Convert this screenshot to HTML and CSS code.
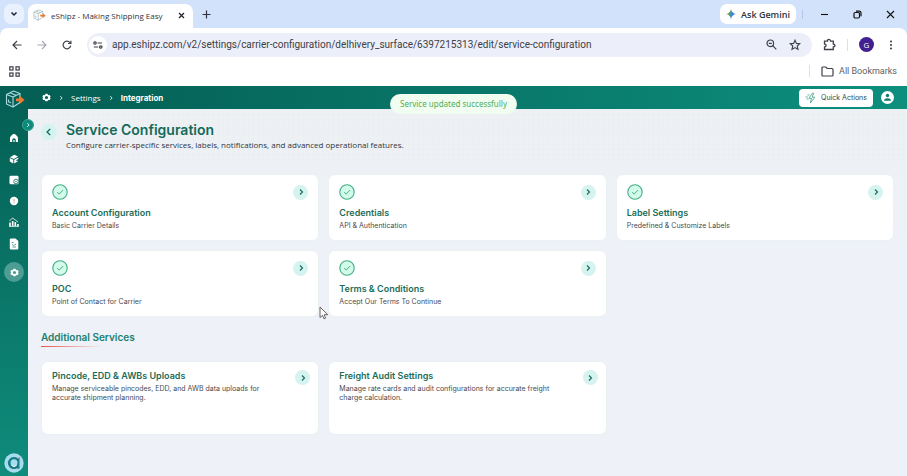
FILE: index.html
```
<!DOCTYPE html>
<html lang="en">
<head>
    <meta charset="UTF-8">
    <meta name="viewport" content="width=device-width, initial-scale=1.0">
    <title>eShipz - Making Shipping Easy</title>
    <link rel="stylesheet" href="styles.css">
</head>
<body>
    <!-- Shared icons -->
    <svg class="sprite" aria-hidden="true">
        <symbol id="chevron" viewBox="0 0 8 8"><path d="M3 1.5 5.5 4 3 6.5" fill="none" stroke="currentColor" stroke-width="1.1"/></symbol>
        <symbol id="check" viewBox="0 0 16 16"><circle cx="8" cy="8" r="7.2" fill="#d3fbe9" stroke="#3fae85" stroke-width="1.1"/><path d="m5.2 8.2 2 1.9 3.8-4" fill="none" stroke="#4bae8b" stroke-width="1"/></symbol>
        <symbol id="gear" viewBox="0 0 10 10"><path fill-rule="evenodd" fill="currentColor" d="M4 .8h2l.4 1 1.100.6 1.100-.1 1 1.700-.7.9v.4l.7.8-1 1.800-1.100-.2-1.100.6L6 9.300H4l-.4-1-1.100-.6-1.100.2-1-1.800.7-.8v-.5L.4 4l1-1.700 1.100.1 1.100-.6zM5 3.200a1.800 1.800 0 1 0 0 3.600 1.800 1.800 0 0 0 0-3.600"/></symbol>
        <symbol id="box" viewBox="0 0 20 18"><g fill="none" stroke="currentColor" stroke-width="1.100" stroke-linejoin="round"><path d="M1.500 4.500 8.500 1l6.500 2.500v9L8 17l-6.500-3z"/><path d="m1.500 4.500 6.500 2.500 7-3.500M8 7v10M5 2.800l6.500 2.700M3.500 9.500v2.200l2.500 1"/></g><path d="M11 8.600h4V6l4.500 4-4.500 3.800v-2.500h-4z" fill="#f07b30"/></symbol>
    </svg>

    <div class="window">
        <header class="browser">
            <div class="tab-strip">
                <button class="tab-search" aria-label="Search tabs"><svg width="8" height="8" viewBox="0 0 8 8"><path d="m1.500 2.500 2.500 2.500 2.500-2.500" fill="none" stroke="#1f2430" stroke-width="1.500"/></svg></button>
                <div class="tab">
                    <svg class="favicon" width="13" height="12"><use href="#box"/></svg>
                    <span>eShipz - Making Shipping Easy</span>
                    <button class="tab-close" aria-label="Close tab"><svg width="7" height="7" viewBox="0 0 7 7"><path d="m1 1 5 5M6 1 1 6" stroke="#1f2430" stroke-width="1.300"/></svg></button>
                </div>
                <button class="tab-new" aria-label="New tab"><svg width="9" height="9" viewBox="0 0 9 9"><path d="M4.500.500v8M.500 4.500h8" stroke="#30343c" stroke-width="1.200"/></svg></button>
                <button class="gemini">
                    <svg width="10" height="10" viewBox="0 0 10 10"><defs><linearGradient id="spark" x1="0" y1=".3" x2="1" y2=".7"><stop offset="0" stop-color="#e7a13c"/><stop offset=".35" stop-color="#54a36a"/><stop offset=".6" stop-color="#3b82e8"/><stop offset="1" stop-color="#4a7be0"/></linearGradient></defs><path d="M5 0q.8 4.200 5 5-4.200.800-5 5-.800-4.200-5-5 4.200-.800 5-5" fill="url(#spark)"/></svg>
                    Ask Gemini
                </button>
                <div class="window-buttons">
                    <button aria-label="Minimize"><svg width="9" height="9" viewBox="0 0 9 9"><path d="M1 4.500h7" stroke="#111" stroke-width="1.100"/></svg></button>
                    <button aria-label="Restore"><svg width="9" height="9" viewBox="0 0 9 9"><g fill="none" stroke="#111" stroke-width="1.200"><rect x="1" y="2.500" width="5.500" height="5.500" rx="1.200"/><path d="M3 1.200h3q2 0 2 2v3"/></g></svg></button>
                    <button aria-label="Close"><svg width="9" height="9" viewBox="0 0 9 9"><path d="m1 1 7 7M8 1 1 8" stroke="#111" stroke-width="1.100"/></svg></button>
                </div>
            </div>

            <div class="toolbar">
                <button aria-label="Back"><svg width="10" height="10" viewBox="0 0 10 10"><path d="M9.500 5H1.200M5 1 1 5l4 4" fill="none" stroke="#3c4048" stroke-width="1.200"/></svg></button>
                <button aria-label="Forward"><svg width="10" height="10" viewBox="0 0 10 10"><path d="M.500 5h8.300M5 1l4 4-4 4" fill="none" stroke="#a5a8ae" stroke-width="1.100"/></svg></button>
                <button aria-label="Reload"><svg width="10" height="10" viewBox="0 0 10 10"><path d="M8.700 5.500A3.800 3.800 0 1 1 8 2.700M8.900.700v2.800H6" fill="none" stroke="#3c4048" stroke-width="1.200"/></svg></button>
                <div class="address">
                    <button class="site-info" aria-label="Site information"><svg width="10" height="8" viewBox="0 0 10 8"><g fill="none" stroke="#3c4048" stroke-width="1.200"><circle cx="2" cy="2" r="1.200"/><path d="M4.500 2H9M.800 6h4.400"/><circle cx="7.800" cy="6" r="1.200"/></g></svg></button>
                    <input class="url" type="text" aria-label="Address" value="app.eshipz.com/v2/settings/carrier-configuration/delhivery_surface/6397215313/edit/service-configuration">
                    <button aria-label="Zoom"><svg width="11" height="11" viewBox="0 0 11 11"><g fill="none" stroke="#3c4048" stroke-width="1.200"><circle cx="4.300" cy="4.300" r="3.300"/><path d="m6.700 6.700 3.600 3.600M2.800 4.300h3"/></g></svg></button>
                    <button aria-label="Bookmark"><svg width="12" height="12" viewBox="0 0 12 12"><path d="m6 1.200 1.400 3.200 3.400.300-2.600 2.300.800 3.400-3-1.800-3 1.800.800-3.400L1.200 4.700l3.400-.300z" fill="none" stroke="#3c4048" stroke-width="1.100"/></svg></button>
                </div>
                <button class="extensions" aria-label="Extensions"><svg width="13" height="13" viewBox="0 0 13 13"><path d="M1.500 3.200h3Q4.500 1.300 6 1.300t1.500 1.900h2.800v3q1.700 0 1.700 1.400T10.300 9v2.500H1.500V9q1.600-.200 1.600-1.500T1.500 6z" fill="none" stroke="#3c4048" stroke-width="1.300"/></svg></button>
                <span class="divider"></span>
                <button class="profile" aria-label="Profile">G</button>
                <button aria-label="Menu"><svg width="4" height="10" viewBox="0 0 4 10"><g fill="#30343c"><circle cx="2" cy="1.500" r="1"/><circle cx="2" cy="5" r="1"/><circle cx="2" cy="8.500" r="1"/></g></svg></button>
            </div>

            <div class="bookmarks">
                <button aria-label="Apps"><svg width="11" height="11" viewBox="0 0 11 11"><g fill="none" stroke="#3c4048" stroke-width="1.200"><rect x=".8" y=".8" width="3.200" height="3.200"/><rect x="7" y=".8" width="3.200" height="3.200"/><rect x=".8" y="7" width="3.200" height="3.200"/><rect x="7" y="7" width="3.200" height="3.200"/></g></svg></button>
                <button class="all-bookmarks">
                    <svg width="13" height="11" viewBox="0 0 13 11"><path d="M1 2q0-1 1-1h2.800l1.400 1.500H11q1 0 1 1V9q0 1-1 1H2Q1 10 1 9z" fill="none" stroke="#3c4048" stroke-width="1.200"/></svg>
                    All Bookmarks
                </button>
            </div>
        </header>

        <div class="app">
            <nav class="sidebar" aria-label="Main">
                <a class="logo" href="#" aria-label="eShipz"><svg width="20" height="18"><use href="#box"/></svg></a>
                <button class="expand" aria-label="Expand menu"><svg width="6" height="6"><use href="#chevron"/></svg></button>
                <a href="#" aria-label="Home"><svg width="10" height="10" viewBox="0 0 10 10"><path fill="#fff" fill-rule="evenodd" d="M5 .8Q9 3 9 5v4H6.800V7Q6.800 5.300 5 5.300T3.200 7v2H1V5Q1 3 5 .800"/><path d="M4.200 7h1.600v2H4.200z" fill="#b9ddd6"/></svg></a>
                <a href="#" aria-label="Shipments"><svg width="10" height="10" viewBox="0 0 10 10"><path fill="#fff" d="m1 3.200 4.300-2.400L9 2.600 4.800 5zM.800 4 4.300 5.700v3.800L.800 7.600zM5.200 5.700 9.300 3.400v1.500L6.600 6.600l2.500.300-3.900 2.500z"/></svg></a>
                <a href="#" aria-label="Orders"><svg width="10" height="10" viewBox="0 0 10 10"><rect x=".5" y=".8" width="9" height="8.400" rx="1.200" fill="#fff"/><circle cx="7" cy="6.500" r="2.300" fill="#fff" stroke="#0a6d61" stroke-width=".8"/><circle cx="7" cy="6.500" r=".7" fill="#0a6d61"/></svg></a>
                <a href="#" aria-label="Alerts"><svg width="10" height="10" viewBox="0 0 10 10"><circle cx="5" cy="5" r="4.200" fill="#fff"/><path d="M5 2.800v2.700M5 6.300v1" stroke="#d39a96" stroke-width="1"/></svg></a>
                <a href="#" aria-label="Analytics"><svg width="10" height="10" viewBox="0 0 10 10"><path d="M1 9V5.500M3.700 9V4M6.300 9V5M8.900 9V7" stroke="#fff" stroke-width="1.600"/><path d="m.500 4 3-3 2.800 2 2.700 2M0 9.400h10" fill="none" stroke="#fff" stroke-width=".8"/></svg></a>
                <a href="#" aria-label="Reports"><svg width="10" height="12" viewBox="0 0 10 12"><path d="M2 .5h4.500L9.300 3v7.500q0 1-1 1H2q-1.200 0-1.200-1v-9Q.800.500 2 .500" fill="#fff"/><path d="M2.700 4.500h2M3 6.500l1.500 1 2.500-1.500M3.500 9h3.500" fill="none" stroke="#4b9488" stroke-width=".9"/></svg></a>
                <a class="active" href="#" aria-label="Settings"><svg width="9" height="9"><use href="#gear"/></svg></a>
                <button class="chat" aria-label="Chat"><svg width="20" height="20" viewBox="0 0 20 20"><circle cx="10" cy="10" r="9.700" fill="#a7dcef"/><path d="M10 4a6 6 0 1 0 2.500 11.400l3 .3V5.500l-1.800-.3Q12 4 10 4" fill="#187d86"/><circle cx="10" cy="9.700" r="3.500" fill="#a7dcef"/><path d="M7.500 12.400q2.500 2.400 5 0" fill="none" stroke="#fff" stroke-width="1"/><circle cx="15.300" cy="5.300" r="1" fill="#d977a0"/></svg></button>
            </nav>

            <div class="content">
                <div class="topbar">
                    <div class="breadcrumb">
                        <svg width="9" height="9"><use href="#gear"/></svg>
                        <svg width="6" height="6"><use href="#chevron"/></svg>
                        <a href="#">Settings</a>
                        <svg width="6" height="6"><use href="#chevron"/></svg>
                        <strong>Integration</strong>
                    </div>
                    <button class="quick-actions">
                        <svg width="12" height="12" viewBox="0 0 12 12"><path d="M7.500 1 4 6.300h2.500L5.300 11l4.500-5.800H7.300L8.500 1zM.500 5h2.300M1.500 7h2M2.500 3h2" fill="none" stroke="#39a286" stroke-width=".8"/></svg>
                        Quick Actions
                    </button>
                    <button class="user" aria-label="Account"><svg width="13" height="13" viewBox="0 0 13 13"><circle cx="6.500" cy="6.500" r="6.500" fill="#fff"/><circle cx="6.500" cy="4.500" r="1.700" fill="#0a7e70"/><path d="M3 9.800q0-2.500 3.500-2.500T10 9.800z" fill="#0a7e70"/></svg></button>
                </div>

                <main>
                    <div class="page-head">
                        <button class="round back" aria-label="Back"><svg width="10" height="10"><use href="#chevron"/></svg></button>
                        <div>
                            <h1>Service Configuration</h1>
                            <p>Configure carrier-specific services, labels, notifications, and advanced operational features.</p>
                        </div>
                    </div>

                    <div class="cards">
                        <a class="card" href="#">
                            <span class="card-top"><svg width="16" height="16"><use href="#check"/></svg><span class="round"><svg width="8" height="8"><use href="#chevron"/></svg></span></span>
                            <h3>Account Configuration</h3>
                            <p>Basic Carrier Details</p>
                        </a>
                        <a class="card" href="#">
                            <span class="card-top"><svg width="16" height="16"><use href="#check"/></svg><span class="round"><svg width="8" height="8"><use href="#chevron"/></svg></span></span>
                            <h3>Credentials</h3>
                            <p>API &amp; Authentication</p>
                        </a>
                        <a class="card" href="#">
                            <span class="card-top"><svg width="16" height="16"><use href="#check"/></svg><span class="round"><svg width="8" height="8"><use href="#chevron"/></svg></span></span>
                            <h3>Label Settings</h3>
                            <p>Predefined &amp; Customize Labels</p>
                        </a>
                        <a class="card" href="#">
                            <span class="card-top"><svg width="16" height="16"><use href="#check"/></svg><span class="round"><svg width="8" height="8"><use href="#chevron"/></svg></span></span>
                            <h3>POC</h3>
                            <p>Point of Contact for Carrier</p>
                        </a>
                        <a class="card" href="#">
                            <span class="card-top"><svg width="16" height="16"><use href="#check"/></svg><span class="round"><svg width="8" height="8"><use href="#chevron"/></svg></span></span>
                            <h3>Terms &amp; Conditions</h3>
                            <p>Accept Our Terms To Continue</p>
                        </a>
                    </div>

                    <h2>Additional Services</h2>
                    <div class="cards">
                        <a class="card service" href="#">
                            <span class="service-text">
                                <h3>Pincode, EDD &amp; AWBs Uploads</h3>
                                <p>Manage serviceable pincodes, EDD, and AWB data uploads for accurate shipment planning.</p>
                            </span>
                            <span class="round"><svg width="8" height="8"><use href="#chevron"/></svg></span>
                        </a>
                        <a class="card service" href="#">
                            <span class="service-text">
                                <h3>Freight Audit Settings</h3>
                                <p>Manage rate cards and audit configurations for accurate freight charge calculation.</p>
                            </span>
                            <span class="round"><svg width="8" height="8"><use href="#chevron"/></svg></span>
                        </a>
                    </div>
                </main>
                <div class="toast" role="status">Service updated successfully</div>
            </div>
        </div>
    </div>

    <svg class="cursor" width="10" height="14" viewBox="0 0 10 14" aria-hidden="true"><path d="M1 1v10.500l2.500-2.200L5 12.800l1.600-.7L5.200 8.700h3.600z" fill="#fff" stroke="#555" stroke-width=".9"/></svg>
</body>
</html>
```
FILE: styles.css
```
* {
    box-sizing: border-box;
}

body {
    margin: 0;
    font-family: Inter, sans-serif;
    font-size: 8px;
    color: #30343c;
}

button {
    display: flex;
    align-items: center;
    justify-content: center;
    padding: 0;
    border: 0;
    background: none;
    font: inherit;
    color: inherit;
}

a {
    color: inherit;
    text-decoration: none;
}

svg {
    display: block;
    flex: none;
}

h1, h2, h3, p {
    margin: 0;
}

.sprite {
    position: absolute;
    width: 0;
    height: 0;
}

.window {
    display: flex;
    flex-direction: column;
    min-height: 100vh;
}

/* Browser */
.browser {
    background: #d3e2fb;
    font-family: "Open Sans", sans-serif;
}

.tab-strip {
    display: flex;
    align-items: center;
    height: 28px;
    padding-left: 4px;
}

.tab-search {
    width: 20px;
    height: 20px;
    border-radius: 7px;
    background: #eaf1fe;
}

.tab {
    display: flex;
    align-items: center;
    align-self: flex-end;
    gap: 5px;
    width: 165px;
    height: 24px;
    margin-left: 4px;
    padding: 0 8px 2px 5px;
    border-radius: 8px 8px 0 0;
    background: #fff;
    white-space: nowrap;
}

.favicon {
    color: #9db5b8;
}

.tab-close {
    margin-left: auto;
}

.tab-new {
    margin-left: 9px;
}

.gemini {
    gap: 5px;
    width: 76px;
    height: 20px;
    margin-left: auto;
    border-radius: 7px;
    background: #fff;
    font-size: 9px;
    font-weight: 600;
}

.window-buttons {
    display: flex;
    gap: 24px;
    margin-left: 6px;
    padding: 0 12px 0 17px;
    border-left: 1px solid #b3c8ea;
}

.toolbar {
    display: flex;
    align-items: center;
    gap: 15px;
    height: 33px;
    padding: 0 14px 0 12px;
    border-radius: 8px 8px 0 0;
    background: #fff;
}

.address {
    display: flex;
    flex: 1;
    align-items: center;
    gap: 12px;
    height: 24px;
    padding: 0 11px 0 2px;
    border-radius: 12px;
    background: #eceff9;
}

.site-info {
    width: 18px;
    height: 18px;
    border-radius: 50%;
    background: #fff;
}

.url {
    flex: 1;
    min-width: 0;
    margin-left: -7px;
    padding: 0;
    border: 0;
    background: none;
    font: 10px Roboto, sans-serif;
    color: #3c4048;
}

.extensions {
    margin-left: -4px;
}

.divider {
    width: 1px;
    height: 12px;
    margin: 0 -4px;
    background: #d3e2fb;
}

.profile {
    width: 15px;
    height: 15px;
    border-radius: 50%;
    background: #43208f;
    color: #fff;
}

.bookmarks {
    display: flex;
    align-items: center;
    justify-content: space-between;
    height: 25px;
    padding: 0 10px 5px 9px;
    background: #fff;
}

.all-bookmarks {
    gap: 5px;
    height: 12px;
    padding-left: 11px;
    border-left: 1px solid #d3e2fb;
    font-family: Roboto, sans-serif;
    font-size: 9px;
    color: #5b5f66;
}

/* Application */
.app {
    display: flex;
    flex: 1;
    background: #eef1f7;
}

.sidebar {
    position: relative;
    z-index: 1;
    display: flex;
    flex-direction: column;
    align-items: center;
    gap: 11px;
    width: 28px;
    padding: 4px 0 3px;
    background: linear-gradient(#045e53, #0f8c7c);
    color: #fff;
}

.logo {
    margin: 0 0 14px 2px;
    color: #a9d9df;
}

/* Sits over the edge of the sidebar */
.expand {
    position: absolute;
    top: 33px;
    right: -6px;
    width: 12px;
    height: 12px;
    border: 1px solid #3aa596;
    border-radius: 50%;
    background: #0d8a7a;
}

.active {
    display: flex;
    align-items: center;
    justify-content: center;
    width: 20px;
    height: 20px;
    margin-top: 1px;
    border-radius: 50%;
    background: #4e9d92;
}

.chat {
    margin-top: auto;
}

.content {
    position: relative;
    flex: 1;
    min-width: 0;
}

.topbar {
    display: flex;
    align-items: center;
    gap: 8px;
    height: 23px;
    padding: 0 13px 0 14px;
    background: linear-gradient(90deg, #045e53, #0d8f7e);
    color: #fff;
}

.breadcrumb {
    display: flex;
    flex: 1;
    align-items: center;
    gap: 7px;
}

.breadcrumb a {
    font-family: "Open Sans", sans-serif;
}

.quick-actions {
    gap: 4px;
    width: 74px;
    height: 18px;
    border-radius: 4px;
    background: #fff;
    font-size: 7px;
    color: #2c4a48;
}

.toast {
    position: absolute;
    top: 8px;
    left: 362px;
    padding: 5px 10px;
    border-radius: 10px;
    background: #f1fdf1;
    font: 8px/10px "Noto Sans", sans-serif;
    color: #4fae57;
    white-space: nowrap;
}

main {
    padding: 0 13px;
    background:
        repeating-linear-gradient(90deg, #e9edf166 0 1px, transparent 1px 5px) 0 0 / 100% 55px no-repeat,
        repeating-linear-gradient(#e9edf166 0 1px, transparent 1px 5px) 0 0 / 100% 55px no-repeat,
        linear-gradient(#edf1f4, #eef1f7 140px);
}

.page-head {
    display: flex;
    gap: 9px;
    height: 65px;
    padding-top: 12px;
}

.round {
    display: flex;
    align-items: center;
    justify-content: center;
    flex: none;
    width: 15px;
    height: 15px;
    border-radius: 50%;
    background: #d5f3ef;
    color: #17685c;
}

.back {
    width: 16px;
    height: 16px;
    margin-top: 3px;
}

.back svg {
    transform: rotate(180deg);
}

h1 {
    font-size: 14px;
    line-height: 17px;
    font-weight: 600;
    color: #146a59;
}

.page-head p {
    margin-top: 1px;
    font-family: "Open Sans", sans-serif;
    line-height: 12px;
}

.cards {
    display: grid;
    grid-template-columns: repeat(3, 1fr);
    gap: 9px;
}

.card {
    min-height: 67px;
    padding: 9px 10px;
    border: 1px solid #e9f1f2;
    border-radius: 7px;
    background: #fff;
}

.card-top {
    display: flex;
    align-items: center;
    justify-content: space-between;
    margin-bottom: 7px;
}

h3 {
    font-size: 9px;
    line-height: 12px;
    font-weight: 600;
    color: #1c6d58;
}

.card p {
    margin-top: 2px;
    font-size: 7px;
    line-height: 9px;
    color: #464a50;
}

h2 {
    width: fit-content;
    margin: 14px 0;
    padding-bottom: 4px;
    background: linear-gradient(90deg, #e5534b, transparent 65%) 0 100% / 100% 1px no-repeat;
    font-size: 10px;
    line-height: 12px;
    font-weight: 600;
    color: #1b8070;
}

.service {
    display: flex;
    justify-content: space-between;
    gap: 12px;
    min-height: 74px;
    padding: 8px 8px 8px 10px;
}

.service-text {
    max-width: 226px;
}

.cursor {
    position: absolute;
    top: 306px;
    left: 319px;
}
```
